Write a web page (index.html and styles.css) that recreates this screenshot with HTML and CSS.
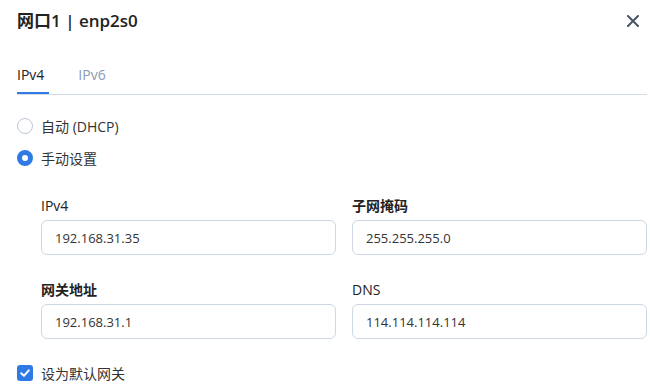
FILE: index.html
```html
<!DOCTYPE html>
<html lang="zh-CN">

<head>
    <meta charset="UTF-8">
    <meta name="viewport" content="width=device-width, initial-scale=1.0">
    <title>网口设置</title>
    <link rel="stylesheet" href="styles.css">
</head>

<body>
    <div class="dialog">
        <div class="header">
            <h2>网口1 | enp2s0</h2>
            <button class="close" aria-label="关闭">
                <svg width="12" height="12" viewBox="0 0 12 12">
                    <path d="M1 1L11 11M11 1L1 11" stroke="#4a5466" stroke-width="2" stroke-linecap="round" fill="none" />
                </svg>
            </button>
        </div>

        <div class="tabs">
            <span class="tab active">IPv4</span>
            <span class="tab">IPv6</span>
        </div>

        <div class="radios">
            <label class="radio-row">
                <span class="radio"></span>
                自动 (DHCP)
            </label>
            <label class="radio-row">
                <span class="radio checked"></span>
                手动设置
            </label>
        </div>

        <div class="fields">
            <div class="field">
                <label for="ip">IPv4</label>
                <input type="text" id="ip" value="192.168.31.35">
            </div>
            <div class="field">
                <label for="mask" class="bold">子网掩码</label>
                <input type="text" id="mask" value="255.255.255.0">
            </div>
            <div class="field">
                <label for="gw" class="bold">网关地址</label>
                <input type="text" id="gw" value="192.168.31.1">
            </div>
            <div class="field">
                <label for="dns">DNS</label>
                <input type="text" id="dns" value="114.114.114.114">
            </div>
        </div>

        <label class="check-row">
            <span class="checkbox">
                <svg width="12" height="12" viewBox="0 0 12 12">
                    <path d="M2.2 6.2L4.9 8.8L9.8 3.4" stroke="#fff" stroke-width="2" stroke-linecap="round" stroke-linejoin="round" fill="none" />
                </svg>
            </span>
            设为默认网关
        </label>
    </div>
</body>
</html>
```

FILE: styles.css
```css
body {
    font-family: 'Open Sans', 'Noto Sans CJK SC', sans-serif;
    background: #fff;
    margin: 0;
    color: #333;
}

.dialog {
    width: 650px;
    height: 392px;
    padding: 0 3px 0 17px;
    box-sizing: border-box;
    overflow: hidden;
}

.header {
    height: 42px;
    display: flex;
    align-items: center;
    justify-content: space-between;
}

.header h2 {
    margin: 0;
    font-size: 17px;
    font-weight: 600;
    color: #222;
    line-height: 24px;
}

.close {
    background: none;
    border: none;
    padding: 0;
    width: 12px;
    height: 12px;
    margin-right: 8px;
    cursor: pointer;
    display: flex;
}

.tabs {
    margin-top: 22px;
    display: flex;
    gap: 29px;
    border-bottom: 1px solid #d3dce8;
}

.tab {
    font-size: 14px;
    line-height: 22px;
    padding: 0 5px 6px 0;
    border-bottom: 2px solid transparent;
    color: #8c9bb3;
}

.tab.active {
    color: #222;
    border-bottom-color: #2f7ae5;
}

.radios {
    margin-top: 15px;
    display: flex;
    flex-direction: column;
}

.radio-row {
    height: 32px;
    display: flex;
    align-items: center;
    gap: 8px;
    font-size: 14px;
    color: #333;
}

.radio {
    width: 16px;
    height: 16px;
    box-sizing: border-box;
    border: 1px solid #bcc7d8;
    border-radius: 50%;
}

.radio.checked {
    border: 5px solid #2f7ae5;
    background: #fff;
}

.fields {
    margin-top: 22px;
    padding-left: 24px;
    display: grid;
    grid-template-columns: 1fr 1fr;
    column-gap: 16px;
    row-gap: 25px;
}

.field {
    display: flex;
    flex-direction: column;
    gap: 4px;
}

.field label {
    font-size: 14px;
    line-height: 20px;
    color: #222;
}

.field label.bold {
    font-weight: 600;
}

.field input {
    height: 35px;
    box-sizing: border-box;
    border: 1px solid #cdd7e5;
    border-radius: 6px;
    padding: 0 13px;
    font-family: inherit;
    font-size: 13px;
    color: #333;
    outline: none;
}

.check-row {
    margin-top: 24px;
    height: 20px;
    display: flex;
    align-items: center;
    gap: 8px;
    font-size: 14px;
    color: #333;
}

.checkbox {
    width: 16px;
    height: 16px;
    border-radius: 3px;
    background: #2f7ae5;
    display: flex;
    align-items: center;
    justify-content: center;
}
```
